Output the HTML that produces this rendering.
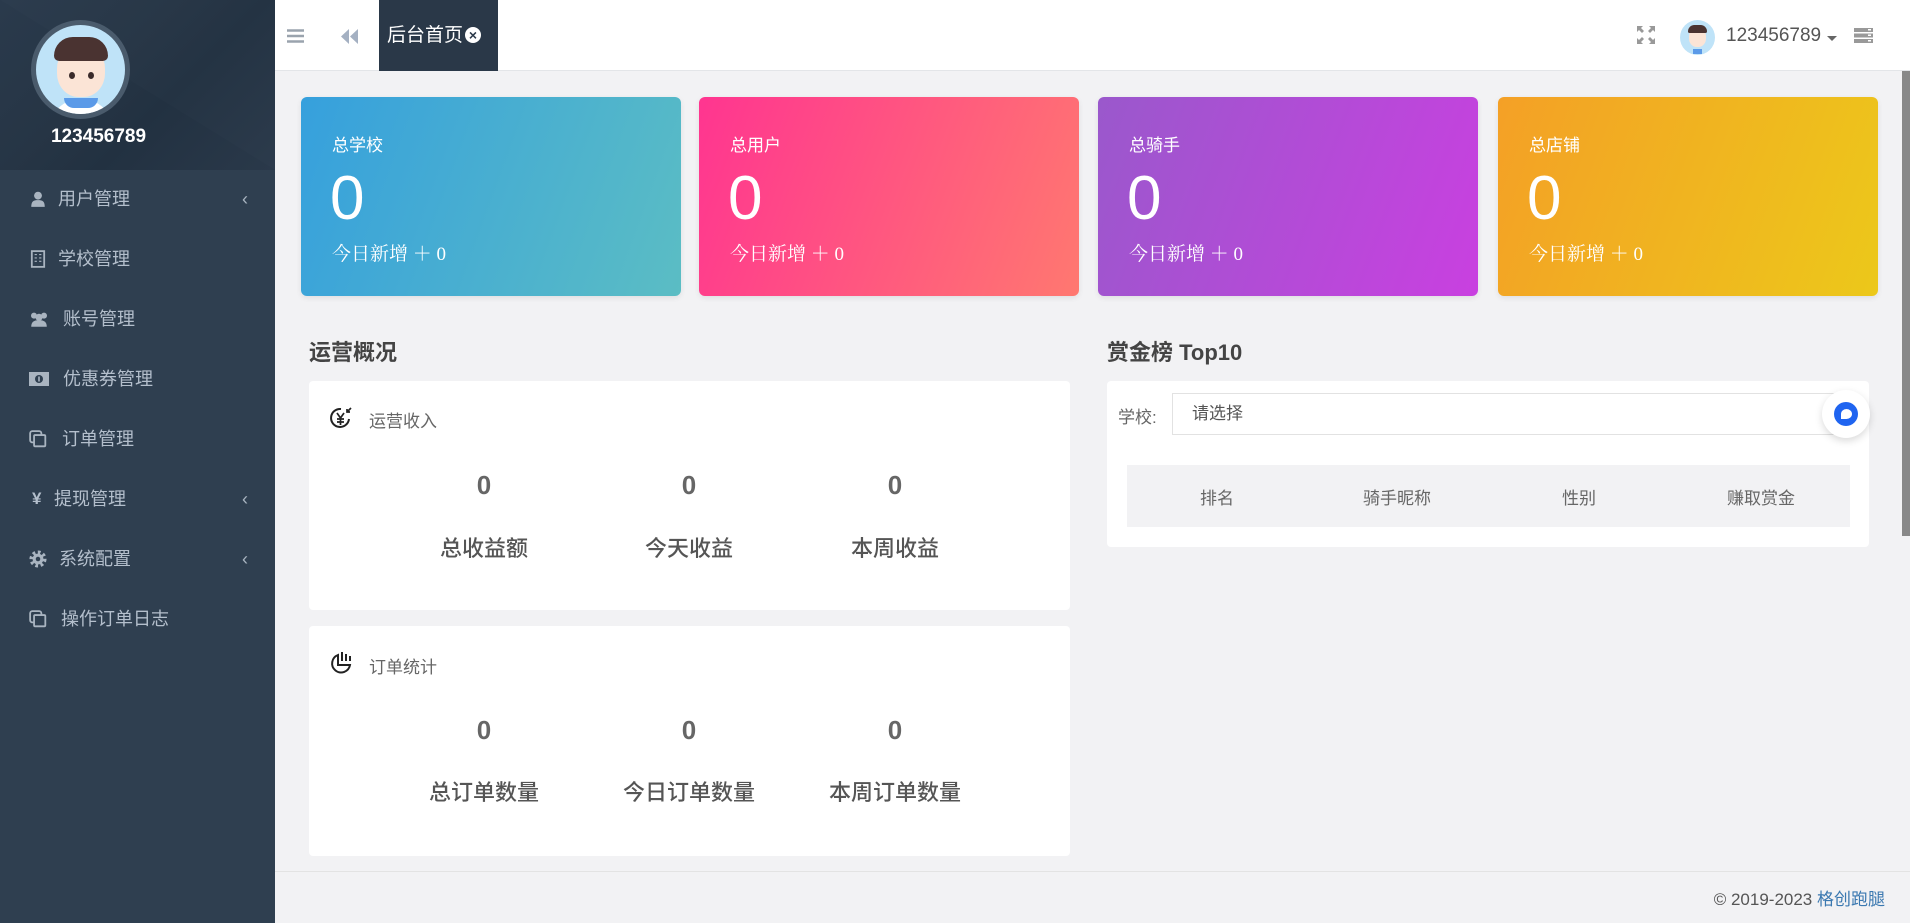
<!DOCTYPE html>
<html><head><meta charset="utf-8">
<style>
*{margin:0;padding:0;box-sizing:border-box}
body{width:1910px;height:923px;overflow:hidden;background:#f2f2f4;font-family:"Liberation Sans","Noto Sans CJK SC",sans-serif;position:relative}
.abs{position:absolute}
#side{left:0;top:0;width:275px;height:923px;background:#2f3f50}
#sidetop{left:0;top:0;width:275px;height:170px;background:linear-gradient(135deg,#2a3a4c 0%,#263545 40%,#223141 60%,#2a394a 100%);overflow:hidden}
.mi{position:absolute;left:0;width:275px;height:40px;color:#b4bfcc;font-size:18px;line-height:40px}
.mi .ic{position:absolute;left:29px;top:11px;width:18px;height:18px}
.mi .t{position:absolute}
.mi .ar{position:absolute;left:242px;top:0;font-size:18px;color:#a9b4c0}
#hdr{left:275px;top:0;width:1635px;height:71px;background:#fff;border-bottom:1px solid #e3e5e8}
.card{position:absolute;top:97px;height:199px;width:380px;border-radius:6px;color:#fff;box-shadow:0 2px 6px rgba(0,0,0,.08)}
.card .a{position:absolute;left:31px;top:34px;font-size:17px}
.card .b{position:absolute;left:29px;top:62px;font-size:62px;line-height:80px}
.card .c{position:absolute;left:31px;top:142px;font-size:19px;font-family:"Liberation Serif","Noto Serif CJK SC",serif}
.panel{position:absolute;background:#fff;border-radius:4px}
.sec{position:absolute;font-size:22px;font-weight:bold;color:#444}
.num{position:absolute;font-size:26px;font-weight:bold;color:#666;width:200px;text-align:center}
.lab{position:absolute;font-size:22px;color:#555;width:220px;text-align:center;font-weight:500}
</style></head><body>
<div id="side" class="abs"></div>
<div id="sidetop" class="abs">
 <div class="abs" style="left:0;top:0;width:0;height:0;border-left:275px solid transparent;border-top:170px solid rgba(255,255,255,.012)"></div>
</div>
<div class="abs" style="left:31px;top:20px;width:99px;height:99px;border-radius:50%;background:#4a5b6c;"></div>
<div class="abs" style="left:36px;top:25px;width:89px;height:89px;border-radius:50%;background:#bfe3f8;overflow:hidden">
 <div class="abs" style="left:21px;top:20px;width:48px;height:52px;border-radius:45%;background:#fbe4d6"></div>
 <div class="abs" style="left:18px;top:12px;width:54px;height:24px;border-radius:22px 22px 6px 6px;background:#4a3331"></div>
 <div class="abs" style="left:33px;top:47px;width:6px;height:7px;border-radius:50%;background:#3a2a2a"></div>
 <div class="abs" style="left:52px;top:47px;width:6px;height:7px;border-radius:50%;background:#3a2a2a"></div>
 <div class="abs" style="left:14px;top:74px;width:62px;height:30px;border-radius:30px 30px 0 0;background:#fff"></div>
 <div class="abs" style="left:28px;top:73px;width:34px;height:10px;border-radius:0 0 10px 10px;background:#5b9ae8"></div>
</div>
<div class="abs" style="left:0;top:126px;width:197px;text-align:center;color:#fff;font-weight:bold;font-size:19px">123456789</div>

<div class="mi" style="top:179px"><svg class="ic" viewBox="0 0 16 16"><circle cx="8" cy="5" r="3.5" fill="#a9b4c0"/><path d="M2 15c0-5 2-6 6-6s6 1 6 6z" fill="#a9b4c0"/></svg><span class="t" style="left:58px">用户管理</span><span class="ar">‹</span></div>
<div class="mi" style="top:239px"><svg class="ic" viewBox="0 0 16 16"><rect x="2.5" y="1" width="11" height="14" fill="none" stroke="#a9b4c0" stroke-width="1.6"/><path d="M5 4h2M9 4h2M5 7h2M9 7h2M5 10h2M9 10h2" stroke="#a9b4c0"/></svg><span class="t" style="left:58px">学校管理</span></div>
<div class="mi" style="top:299px"><svg class="ic" viewBox="0 0 18 16" style="width:20px"><circle cx="4.5" cy="5" r="2.7" fill="#a9b4c0"/><circle cx="13.5" cy="5" r="2.7" fill="#a9b4c0"/><circle cx="9" cy="6.5" r="3.2" fill="#a9b4c0"/><path d="M2 15c0-4 2-6 7-6s7 2 7 6z" fill="#a9b4c0"/></svg><span class="t" style="left:63px">账号管理</span></div>
<div class="mi" style="top:359px"><svg class="ic" viewBox="0 0 20 14" style="width:20px;top:13px;height:14px"><rect x="0" y="0" width="20" height="14" fill="#a9b4c0"/><circle cx="10" cy="7" r="4" fill="#2f3f50"/><rect x="9.2" y="4.5" width="1.6" height="5" fill="#a9b4c0"/></svg><span class="t" style="left:63px">优惠券管理</span></div>
<div class="mi" style="top:419px"><svg class="ic" viewBox="0 0 16 16"><rect x="1" y="1" width="10" height="10" rx="2" fill="none" stroke="#a9b4c0" stroke-width="1.6"/><rect x="4.5" y="4.5" width="10" height="10" rx="1" fill="#2f3f50" stroke="#a9b4c0" stroke-width="1.6"/></svg><span class="t" style="left:62px">订单管理</span></div>
<div class="mi" style="top:479px"><span class="t" style="left:32px;font-weight:bold;font-size:17px">¥</span><span class="t" style="left:54px">提现管理</span><span class="ar">‹</span></div>
<div class="mi" style="top:539px"><svg class="ic" viewBox="0 0 16 16"><circle cx="8" cy="8" r="5.8" fill="none" stroke="#a9b4c0" stroke-width="3.6" stroke-dasharray="2.3 2.2"/><circle cx="8" cy="8" r="4.8" fill="#a9b4c0"/><circle cx="8" cy="8" r="2" fill="#2f3f50"/></svg><span class="t" style="left:59px">系统配置</span><span class="ar">‹</span></div>
<div class="mi" style="top:599px"><svg class="ic" viewBox="0 0 16 16"><rect x="1" y="1" width="10" height="10" rx="2" fill="none" stroke="#a9b4c0" stroke-width="1.6"/><rect x="4.5" y="4.5" width="10" height="10" rx="1" fill="#2f3f50" stroke="#a9b4c0" stroke-width="1.6"/></svg><span class="t" style="left:61px">操作订单日志</span></div>

<div id="hdr" class="abs"></div>
<svg class="abs" style="left:287px;top:29px" width="17" height="14" viewBox="0 0 17 14"><path d="M0 1.5h17M0 7h17M0 12.5h17" stroke="#9aa3ad" stroke-width="2.6"/></svg>
<svg class="abs" style="left:341px;top:29px" width="17" height="15" viewBox="0 0 17 15"><path d="M8 0L0 7.5 8 15zM17 0L9 7.5 17 15z" fill="#a4b0c2"/></svg>
<div class="abs" style="left:379px;top:0;width:119px;height:71px;background:#2a3848;color:#fff;font-size:19px;line-height:72px;padding-left:8px">后台首页<span style="display:inline-block;width:16px;height:16px;border-radius:50%;background:#fff;color:#2a3848;font-size:14px;line-height:16px;text-align:center;font-weight:bold;vertical-align:1px;margin-left:2px">×</span></div>
<svg class="abs" style="left:1637px;top:26px" width="18" height="18" viewBox="0 0 18 18" fill="#999"><path d="M0 0h6L4 2l3 3-2 2-3-3-2 2zM18 0v6l-2-2-3 3-2-2 3-3-2-2zM0 18v-6l2 2 3-3 2 2-3 3 2 2zM18 18h-6l2-2-3-3 2-2 3 3 2-2z"/></svg>
<div class="abs" style="left:1680px;top:20px;width:35px;height:35px;border-radius:50%;background:#bfe3f8;overflow:hidden"><div class="abs" style="left:9px;top:8px;width:17px;height:19px;border-radius:45%;background:#fbe4d6"></div><div class="abs" style="left:8px;top:5px;width:19px;height:8px;border-radius:8px 8px 2px 2px;background:#4a3331"></div><div class="abs" style="left:13px;top:29px;width:9px;height:5px;background:#5b9ae8"></div></div>
<div class="abs" style="left:1726px;top:25px;font-size:19px;color:#555">123456789</div>
<div class="abs" style="left:1827px;top:36px;width:0;height:0;border-left:5px solid transparent;border-right:5px solid transparent;border-top:5px solid #666"></div>
<svg class="abs" style="left:1854px;top:28px" width="19" height="15" viewBox="0 0 19 15"><rect y="0" width="19" height="4" fill="#999"/><rect y="5.5" width="19" height="4" fill="#999"/><rect y="11" width="19" height="4" fill="#999"/><rect x="14" y="1" width="3" height="1.5" fill="#fff"/><rect x="14" y="6.5" width="3" height="1.5" fill="#fff"/><rect x="14" y="12" width="3" height="1.5" fill="#fff"/></svg>
<div class="abs" style="left:1902px;top:71px;width:8px;height:465px;background:#888"></div>

<div class="card" style="left:301px;background:linear-gradient(110deg,#36a0dd,#5bbdc4)"><div class="a">总学校</div><div class="b">0</div><div class="c">今日新增 ＋ 0</div></div>
<div class="card" style="left:699px;background:linear-gradient(110deg,#ff3590,#ff7870)"><div class="a">总用户</div><div class="b">0</div><div class="c">今日新增 ＋ 0</div></div>
<div class="card" style="left:1098px;background:linear-gradient(110deg,#9a58cc,#c940e0)"><div class="a">总骑手</div><div class="b">0</div><div class="c">今日新增 ＋ 0</div></div>
<div class="card" style="left:1498px;background:linear-gradient(110deg,#f4a026,#ecc81a)"><div class="a">总店铺</div><div class="b">0</div><div class="c">今日新增 ＋ 0</div></div>

<div class="sec" style="left:309px;top:335px">运营概况</div>
<div class="panel" style="left:309px;top:381px;width:761px;height:229px"></div>
<svg class="abs" style="left:328px;top:405px" width="26" height="26" viewBox="0 0 26 26"><path d="M21 14a9 9 0 1 1-8-10" fill="none" stroke="#222" stroke-width="2"/><path d="M9 8l3.5 5 3.5-5M12.5 13v7M9 14h7M9 17h7" fill="none" stroke="#222" stroke-width="1.7"/><path d="M23 3l-4 4M19 4v3h3" fill="none" stroke="#222" stroke-width="1.7"/></svg>
<div class="abs" style="left:369px;top:407px;font-size:17px;color:#666">运营收入</div>
<div class="num" style="left:384px;top:470px">0</div><div class="num" style="left:589px;top:470px">0</div><div class="num" style="left:795px;top:470px">0</div>
<div class="lab" style="left:374px;top:531px">总收益额</div><div class="lab" style="left:579px;top:531px">今天收益</div><div class="lab" style="left:785px;top:531px">本周收益</div>

<div class="panel" style="left:309px;top:626px;width:761px;height:230px"></div>
<svg class="abs" style="left:328px;top:650px" width="26" height="26" viewBox="0 0 26 26"><path d="M10 5a9 9 0 1 0 12 10H10z" fill="none" stroke="#222" stroke-width="2"/><path d="M14 2v9M18 4v7M22 6v5" stroke="#222" stroke-width="2"/></svg>
<div class="abs" style="left:369px;top:653px;font-size:17px;color:#666">订单统计</div>
<div class="num" style="left:384px;top:715px">0</div><div class="num" style="left:589px;top:715px">0</div><div class="num" style="left:795px;top:715px">0</div>
<div class="lab" style="left:374px;top:775px">总订单数量</div><div class="lab" style="left:579px;top:775px">今日订单数量</div><div class="lab" style="left:785px;top:775px">本周订单数量</div>

<div class="sec" style="left:1107px;top:335px">赏金榜 Top10</div>
<div class="panel" style="left:1107px;top:381px;width:762px;height:166px"></div>
<div class="abs" style="left:1118px;top:403px;font-size:17px;color:#666">学校:</div>
<div class="abs" style="left:1172px;top:393px;width:675px;height:42px;border:1px solid #e2e2e2;background:#fff;font-size:17px;color:#555;line-height:40px;padding-left:19px">请选择</div>
<div class="abs" style="left:1127px;top:465px;width:723px;height:62px;background:#f2f2f4"></div>
<div class="abs" style="left:1167px;top:484px;width:100px;text-align:center;font-size:17px;color:#666">排名</div>
<div class="abs" style="left:1347px;top:484px;width:100px;text-align:center;font-size:17px;color:#666">骑手昵称</div>
<div class="abs" style="left:1529px;top:484px;width:100px;text-align:center;font-size:17px;color:#666">性别</div>
<div class="abs" style="left:1711px;top:484px;width:100px;text-align:center;font-size:17px;color:#666">赚取赏金</div>
<div class="abs" style="left:1822px;top:390px;width:48px;height:48px;border-radius:50%;background:#fff;box-shadow:0 3px 8px rgba(0,0,0,.15)"></div>
<div class="abs" style="left:1834px;top:402px;width:24px;height:24px;border-radius:50%;background:#1f64f0"></div>
<div class="abs" style="left:1841px;top:409px;width:11px;height:10px;border-radius:50% 50% 50% 0;background:#fff"></div>

<div class="abs" style="left:275px;top:871px;width:1635px;height:52px;background:#f2f2f4;border-top:1px solid #e3e3e3"></div>
<div class="abs" style="right:25px;top:885px;font-size:17px;color:#555">© 2019-2023 <span style="color:#3a78b0">格创跑腿</span></div>
</body></html>
